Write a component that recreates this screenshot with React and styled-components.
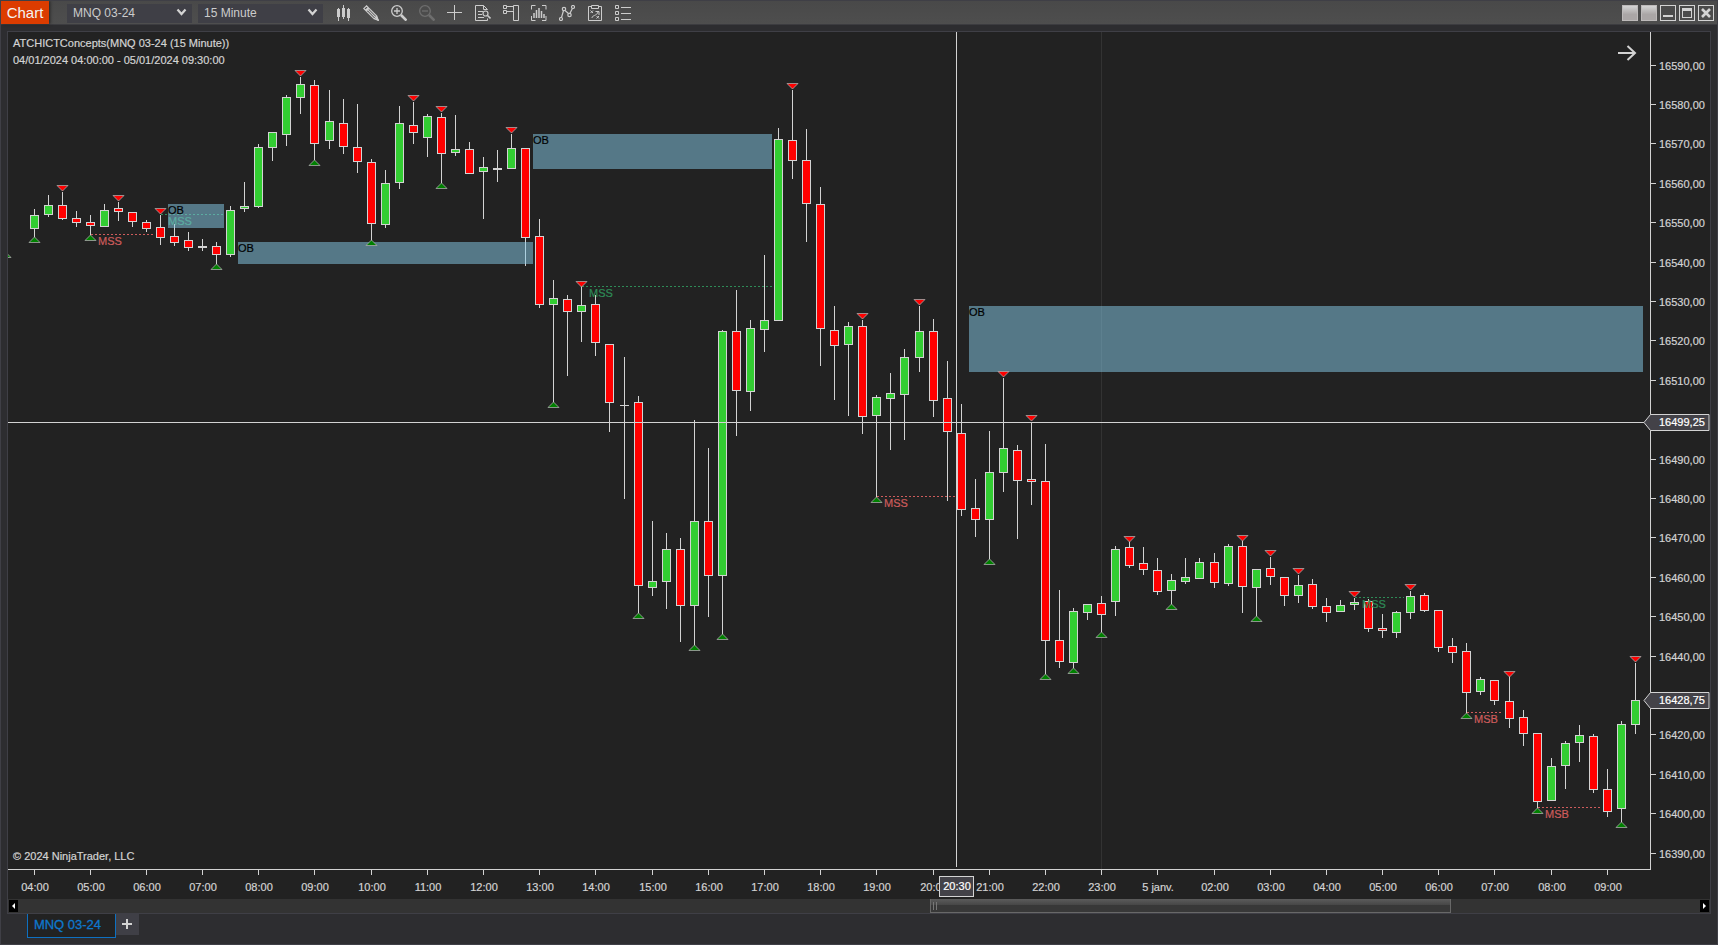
import {useLayoutEffect, useRef, useState} from "react";
import styled, {createGlobalStyle} from "styled-components";


const BAR_SPACING = 14.048;
const AXIS_WIDTH = 60;
const TIME_AXIS_HEIGHT = 30;
const RANGE_TOP = 32;
const RANGE = 837;
const LIGHT = "#d3d3d3";

// high, body top, body bottom, low, direction (u = up, d = down, n = flat)
const bars = [
    [209, 215, 229, 237, "u"], [195, 205, 215, 217, "u"], [192, 205, 219, 220, "d"], [211, 218, 223, 227, "d"],
    [215, 222, 226, 235, "d"], [204, 210, 227, 227, "u"], [202, 208, 212, 221, "d"], [212, 212, 222, 227, "d"],
    [220, 222, 229, 232, "d"], [215, 227, 238, 245, "d"], [224, 236, 243, 246, "d"], [232, 240, 248, 251, "d"],
    [239, 246, 248, 251, "n"], [242, 246, 255, 264, "d"], [206, 210, 255, 257, "u"], [182, 206, 209, 212, "u"],
    [144, 147, 207, 208, "u"], [132, 132, 148, 161, "u"], [95, 97, 135, 146, "u"], [77, 84, 98, 114, "u"],
    [80, 85, 144, 160, "d"], [90, 121, 141, 149, "u"], [99, 123, 147, 154, "d"], [104, 147, 162, 173, "d"],
    [159, 162, 224, 241, "d"], [170, 183, 225, 228, "u"], [106, 123, 183, 189, "u"], [102, 125, 133, 144, "d"],
    [114, 116, 138, 157, "u"], [113, 117, 154, 183, "d"], [115, 149, 153, 156, "u"], [142, 149, 174, 174, "d"],
    [157, 167, 172, 219, "u"], [150, 168, 170, 182, "n"], [134, 148, 169, 169, "u"], [148, 148, 238, 266, "d"],
    [219, 236, 305, 308, "d"], [280, 298, 305, 402, "u"], [295, 299, 312, 376, "d"], [286, 305, 312, 342, "u"],
    [295, 304, 343, 356, "d"], [344, 344, 403, 432, "d"], [357, 405, 406, 499, "n"], [396, 402, 586, 613, "d"],
    [521, 581, 588, 596, "u"], [533, 549, 582, 609, "u"], [538, 549, 606, 642, "d"], [420, 521, 606, 645, "u"],
    [448, 521, 576, 617, "d"], [330, 331, 576, 634, "u"], [290, 331, 391, 436, "d"], [320, 328, 392, 411, "u"],
    [255, 320, 330, 352, "u"], [128, 139, 321, 321, "u"], [90, 140, 161, 179, "d"], [129, 160, 204, 242, "d"],
    [187, 204, 329, 366, "d"], [306, 330, 346, 400, "d"], [322, 326, 345, 416, "u"], [320, 326, 417, 434, "d"],
    [395, 397, 416, 497, "u"], [373, 393, 399, 450, "u"], [349, 357, 395, 440, "u"], [306, 331, 358, 372, "u"],
    [319, 331, 401, 417, "d"], [361, 398, 432, 501, "d"], [404, 433, 510, 516, "d"], [479, 508, 520, 537, "d"],
    [431, 472, 520, 559, "u"], [378, 448, 473, 492, "u"], [445, 450, 481, 539, "d"], [422, 479, 482, 505, "d"],
    [444, 481, 641, 674, "d"], [590, 640, 662, 668, "d"], [608, 611, 663, 668, "u"], [604, 604, 613, 620, "u"],
    [596, 603, 615, 632, "d"], [546, 549, 602, 616, "u"], [542, 547, 566, 568, "d"], [547, 563, 570, 575, "d"],
    [558, 570, 592, 595, "d"], [574, 580, 591, 604, "u"], [558, 577, 582, 584, "u"], [558, 562, 579, 579, "u"],
    [553, 562, 583, 588, "d"], [544, 546, 584, 586, "u"], [541, 546, 587, 613, "d"], [569, 569, 588, 616, "u"],
    [557, 568, 577, 585, "d"], [577, 577, 596, 606, "d"], [575, 585, 596, 603, "u"], [579, 584, 607, 609, "d"],
    [598, 606, 613, 622, "d"], [600, 605, 612, 612, "u"], [598, 602, 605, 610, "u"], [599, 601, 629, 632, "d"],
    [614, 628, 631, 638, "d"], [611, 612, 633, 638, "u"], [591, 596, 613, 619, "u"], [593, 595, 611, 612, "d"],
    [610, 610, 648, 652, "d"], [638, 646, 653, 663, "d"], [643, 651, 693, 713, "d"], [677, 679, 692, 695, "u"],
    [680, 680, 701, 705, "d"], [676, 701, 719, 728, "d"], [710, 717, 734, 746, "d"], [733, 733, 802, 808, "d"],
    [758, 766, 801, 801, "u"], [741, 743, 766, 789, "u"], [725, 735, 743, 762, "u"], [734, 736, 790, 793, "d"],
    [769, 789, 812, 817, "d"], [721, 724, 809, 822, "u"], [663, 700, 725, 734, "u"]
];

// bar index, top of the marker
const swingHighs = [
    [2, 185], [6, 195], [9, 208], [19, 70], [27, 95], [29, 106], [34, 127], [39, 281], [54, 83], [59, 313], [63, 299],
    [69, 371], [71, 415], [78, 536], [86, 535], [88, 550], [90, 568], [94, 591], [98, 584], [105, 671], [114, 656]
];

const swingLows = [
    [-2, 252], [0, 237], [4, 235], [13, 264], [20, 160], [24, 240], [29, 183], [37, 402], [43, 613], [47, 645],
    [49, 634], [60, 497], [68, 559], [72, 674], [74, 668], [76, 632], [81, 604], [87, 616], [102, 713], [107, 808],
    [113, 822]
];

const orderBlocks = [
    {from: 9, to: 13, top: 204, bottom: 228},
    {from: 14, to: 35, top: 242, bottom: 264},
    {from: 35, to: 52, top: 134, bottom: 169},
    {from: 66, to: 114, top: 306, bottom: 372}
];

const structures = [
    {from: 4, to: 8, level: 234, label: "MSS", bullish: false},
    {from: 9, to: 13, level: 214, label: "MSS", bullish: true},
    {from: 39, to: 52, level: 286, label: "MSS", bullish: true},
    {from: 60, to: 65, level: 496, label: "MSS", bullish: false},
    {from: 94, to: 97, level: 597, label: "MSS", bullish: true},
    {from: 102, to: 104, level: 712, label: "MSB", bullish: false},
    {from: 107, to: 111, level: 807, label: "MSB", bullish: false}
];

const timeLabels = [
    "04:00", "05:00", "06:00", "07:00", "08:00", "09:00", "10:00", "11:00", "12:00", "13:00", "14:00", "15:00",
    "16:00", "17:00", "18:00", "19:00", "20:00", "21:00", "22:00", "23:00", "5 janv.", "02:00", "03:00", "04:00",
    "05:00", "06:00", "07:00", "08:00", "09:00"
];

const fills = {u: "#32cd32", d: "#ff0000", n: LIGHT};

const GlobalStyle = createGlobalStyle`
  * {
    box-sizing: border-box;
  }

  body {
    margin: 0;
    background-color: #2d2d30;
    font-family: "Liberation Sans", Arial, sans-serif;
    color: ${LIGHT};
  }

  button, select {
    font-family: inherit;
    padding: 0;
    border: none;
    border-radius: 0;
  }
`;

const Window = styled.div`
  height: 100vh;
  min-height: 400px;
  display: flex;
  flex-direction: column;
  border: 1px solid #3f3f46;
  overflow: hidden;
`;

const TitleBar = styled.header`
  height: 24px;
  flex: none;
  display: flex;
  align-items: center;
  padding-right: 3px;
  background: linear-gradient(#494949, #4e4e4e);
  border-bottom: 1px solid #3c3c40;
`;

const Title = styled.h1`
  height: 23px;
  width: 48px;
  margin: 0 18px 0 0;
  background-color: #dc3c00;
  box-shadow: 1px 0 3px #222222;
  color: #f4f4f4;
  font-size: 15px;
  font-weight: normal;
  line-height: 23px;
  text-align: center;
`;

const Dropdown = styled.div`
  position: relative;
  width: 125px;
  height: 19px;
  margin-right: ${props => props.$last ? "12px" : "6px"};

  select {
    appearance: none;
    width: 100%;
    height: 100%;
    padding-left: 6px;
    background-color: #3f3f46;
    color: #cccccc;
    font-size: 12px;
  }

  svg {
    position: absolute;
    right: 5px;
    top: 5px;
    pointer-events: none;
  }
`;

const Tools = styled.nav`
  display: flex;
  gap: 12px;
  flex: 1;
`;

const IconButton = styled.button`
  width: 16px;
  height: 16px;
  background: none;
  color: ${props => props.disabled ? "#6e6e6e" : "#cccccc"};

  svg {
    display: block;
  }
`;

const WindowButtons = styled.div`
  display: flex;
  gap: 3px;
`;

const WindowButton = styled.button`
  width: 16px;
  height: 16px;
  background: ${props => props.$filled ? "linear-gradient(#d4d4d4, #aaa6a6 60%)" : "none"};
  border: 1px solid ${props => props.$filled ? "#bdbaba" : LIGHT};
  color: ${LIGHT};

  svg {
    display: block;
  }
`;

const Panel = styled.main`
  flex: 1;
  min-height: 0;
  margin: 6px 6px 0;
  display: flex;
  flex-direction: column;
  border: 1px solid #3f3f46;
  background-color: #222222;
`;

const Plot = styled.div`
  flex: 1;
  min-height: 0;
  overflow: hidden;

  svg {
    display: block;
    width: 100%;
    height: 100%;
  }
`;

const ChartText = styled.text`
  font-size: 11px;
  fill: ${props => props.$color || LIGHT};
  stroke: ${props => props.$color || LIGHT};
  stroke-width: 0.2px;
`;

const ScrollBar = styled.div`
  height: 14px;
  flex: none;
  display: flex;
  align-items: center;
  padding: 0 1px;
  background-color: #333333;
`;

const ScrollArrow = styled.button`
  width: 9px;
  height: 12px;
  background-color: #000000;

  svg {
    display: block;
  }
`;

const ScrollTrack = styled.div`
  flex: 1;
  height: 14px;
  display: flex;
`;

const ScrollThumb = styled.div`
  width: 31%;
  height: 14px;
  margin-left: 54.2%;
  padding: 3px 2px;
  display: flex;
  gap: 2px;
  background: linear-gradient(#5c5c5c, #454545 50%, #383838 50%);
  border: solid #686868;
  border-width: 0 1px 1px;
`;

const Grip = styled.span`
  width: 1px;
  height: 8px;
  background-color: #777777;
`;

const TabBar = styled.footer`
  height: 30px;
  flex: none;
  display: flex;
  align-items: flex-start;
  padding-left: 26px;
`;

const Tab = styled.button`
  width: 89px;
  height: 24px;
  padding: 0 8px 2px 0;
  background-color: #222222;
  border: solid #0e70c0;
  border-width: 0 1px 1px;
  color: #0e78cc;
  font-size: 13px;
  -webkit-text-stroke: 0.3px #0e78cc;
`;

const AddTab = styled.button`
  width: 23px;
  height: 21px;
  padding: 0 1px 1px 0;
  background-color: #3f3f46;
  color: ${LIGHT};

  svg {
    display: block;
    margin: auto;
  }
`;

const tools = [
    {
        name: "Chart style",
        icon: <g fill="currentColor"><path d="M2 4h3v8H2zM3 3h1v13H3zM7 3h3v9H7zM8 0h1v14H8zM12 4h3v9h-3zM13 3h1v13h-1z" /></g>
    },
    {
        name: "Drawing tools",
        icon: <g fill="none" stroke="currentColor" strokeWidth="1.2"><path d="M3.5 .8.8 3.5l1.7 1.7 2.7-2.7zM3.3 6l2.7-2.7 7.8 7.8 1.2 3.9-3.9-1.2zM4.7 4.7l7.8 7.8M11.1 13.8l2.7-2.7" /><path d="M14 13l1.7 2.7L13 14z" fill="currentColor" /></g>
    },
    {
        name: "Zoom in",
        icon: <g fill="none" stroke="currentColor"><circle cx="6" cy="6" r="5.3" strokeWidth="1.3" /><path d="M3 6h6M6 3v6" strokeWidth="1.3" /><path d="m10 10 5.5 5.5" strokeWidth="2.6" /></g>
    },
    {
        name: "Zoom out",
        disabled: true,
        icon: <g fill="none" stroke="currentColor"><circle cx="6" cy="6" r="5.3" strokeWidth="1.3" /><path d="M3 6h6" strokeWidth="1.3" /><path d="m10 10 5.5 5.5" strokeWidth="2.6" /></g>
    },
    {
        name: "Cursor",
        icon: <path d="M7 0h1v15H7zM0 7h15v1H0z" fill="currentColor" />
    },
    {
        name: "Data box",
        icon: <g fill="none" stroke="currentColor"><path d="M12.5 13.5v2H.5V.5h8l4 4M8.5.5v4h4" /><path d="M3 6.5h5M3 9.5h4M3 12.5h6" /><circle cx="10.5" cy="8.5" r="2.5" strokeWidth="1.2" /><path d="m12.5 10.5 3 3" strokeWidth="1.6" /></g>
    },
    {
        name: "Chart trader",
        icon: <g fill="none" stroke="currentColor"><path d="M.5.5h3v3h-3zM.5 5.5h3v3h-3zM10.5 5.5V.5h5v15h-5v-10M4 1.5h6.5M4 6.5h6.5" /></g>
    },
    {
        name: "Indicators",
        icon: <g fill="none" stroke="currentColor"><path d="M4.5.5h-4v4M11 .5h4v4M.5 11v4.5h4M15 11v4.5h-4" /><path d="M3 13V8M5.5 13V5M8 13V3M10.5 13V6M13 13V9" strokeWidth="1.5" /></g>
    },
    {
        name: "Strategies",
        icon: <g fill="none" stroke="currentColor" strokeWidth="1.2"><circle cx="2" cy="14" r="1.5" /><circle cx="5" cy="4" r="1.7" /><circle cx="10.5" cy="10" r="1.7" /><circle cx="14" cy="2" r="1.5" /><path d="M2.5 12.5 4.5 5.5M6 5.5l3.5 3M11 8.3l2.5-5" /></g>
    },
    {
        name: "Properties",
        icon: <g fill="none" stroke="currentColor"><path d="M4.5 1.5h-3v14h13v-14h-3M4.5.5h7v3h-7z" /><path d="m3.5 5.5 2.5 2.5M6 5.5 3.5 8M9.5 11l2.5 2.5M12 11l-2.5 2.5M5 13c0-3 5-2 6-6M8.5 6.5H12V10" /></g>
    },
    {
        name: "List",
        icon: <g fill="none" stroke="currentColor"><path d="M.5.5h3v3h-3zM.5 6.5h3v3h-3zM.5 12.5h3v3h-3z" /><path d="M6 2.5h10M6 8.5h10M6 14.5h10" /></g>
    }
];

function Select({label, value, last}) {
    return (
        <Dropdown $last={last}>
            <select aria-label={label} defaultValue={value}>
                <option>{value}</option>
            </select>
            <svg width="11" height="8" viewBox="0 0 11 8">
                <path d="M1.5 1.5 5.5 6l4-4.5" fill="none" stroke="#d3d3d3" strokeWidth="2.2" />
            </svg>
        </Dropdown>
    );
}

function Candle({x, y, bar}) {
    const [high, top, bottom, low, direction] = bar;
    const bodyTop = y(top);
    const bodyHeight = y(bottom) - bodyTop;

    return (
        <g shapeRendering="crispEdges">
            <rect x={x} y={y(high)} width="1" height={y(low) - y(high)} fill={LIGHT} />
            <rect x={x - 4} y={bodyTop} width="9" height={bodyHeight} fill={LIGHT} />
            {
                direction !== "n" && bodyHeight > 2
                    ?
                    <rect x={x - 3} y={bodyTop + 1} width="7" height={bodyHeight - 2} fill={fills[direction]} />
                    :
                    ""
            }
        </g>
    );
}

function PriceTag({x, y, children}) {
    return (
        <g transform={`translate(${x} ${y})`}>
            <path d={`M-6 .5 .5-7.5H${AXIS_WIDTH - 1}V8.5H.5z`} fill="#434248" stroke={LIGHT} />
            <ChartText x="9" y="4" $color="#ffffff">{children}</ChartText>
        </g>
    );
}

function PriceChart() {
    const box = useRef(null);
    const [size, setSize] = useState({width: 1702, height: 867});

    useLayoutEffect(() => {
        const measure = () => setSize({width: box.current.clientWidth, height: box.current.clientHeight});
        measure();
        window.addEventListener("resize", measure);
        return () => window.removeEventListener("resize", measure);
    }, []);

    const right = size.width - AXIS_WIDTH;
    const bottom = size.height - TIME_AXIS_HEIGHT;
    const x = index => right - 1616 + Math.floor(index * BAR_SPACING);
    const y = value => Math.round((value - RANGE_TOP) * bottom / RANGE);

    const prices = [];
    for (let i = 0; i <= 20; i++) {
        prices.push({price: 16590 - i * 10, y: y(Math.floor(65 + i * 39.4))});
    }

    const cursorX = x(65) + 9;
    const cursorY = y(422);

    return (
        <Plot ref={box}>
            <svg role="img" aria-label="MNQ 03-24, 15 minute candles">
                <rect x={x(76)} width="1" height={bottom} fill="#333333" />

                {bars.map((bar, i) => <Candle key={i} x={x(i)} y={y} bar={bar} />)}

                {structures.map(s => {
                    const color = s.bullish ? "#2e8b57" : "#cd5c5c";
                    return (
                        <g key={s.level}>
                            <line
                                x1={x(s.from) + 1} x2={x(s.to) + 8} y1={y(s.level) + 0.5} y2={y(s.level) + 0.5}
                                stroke={color} strokeDasharray="2 2"
                            />
                            <ChartText x={x(s.from) + 8} y={y(s.level) + 11} $color={color}>{s.label}</ChartText>
                        </g>
                    );
                })}

                {orderBlocks.map(b => (
                    <g key={b.from}>
                        <rect
                            x={x(b.from) + 8} y={y(b.top)} width={x(b.to) - x(b.from)} height={y(b.bottom) - y(b.top)}
                            fill="#87ceeb" fillOpacity="0.5"
                        />
                        <ChartText x={x(b.from) + 8} y={y(b.top) + 10} $color="#000000">OB</ChartText>
                    </g>
                ))}

                {swingHighs.map(([i, top]) => (
                    <path
                        key={i} transform={`translate(${x(i)} ${y(top)})`}
                        d="M-5 .5H6L.5 6z" fill="#ff0000" stroke="#a9a9a9" strokeWidth="0.8"
                    />
                ))}
                {swingLows.map(([i, top]) => (
                    <path
                        key={i} transform={`translate(${x(i)} ${y(top)})`}
                        d="M-5 5.5H6L.5 0z" fill="#008000" stroke="#a9a9a9" strokeWidth="0.8"
                    />
                ))}

                {/* axes */}
                <g fill={LIGHT}>
                    <rect x={right} width="1" height={bottom + 1} />
                    <rect y={bottom} width={right + 1} height="1" />
                    {prices.map(p => <rect key={p.price} x={right} y={p.y} width="6" height="1" />)}
                    {timeLabels.map((t, i) => <rect key={i} x={x(i * 4)} y={bottom} width="1" height="6" />)}
                </g>
                {prices.filter(p => p.price !== 16500 && p.price !== 16430).map(p => (
                    <ChartText key={p.price} x={right + 9} y={p.y + 5}>{p.price},00</ChartText>
                ))}
                {timeLabels.map((t, i) => (
                    <ChartText key={i} x={x(i * 4) + 1} y={bottom + 22} textAnchor="middle">{t}</ChartText>
                ))}

                {/* crosshair */}
                <rect x={cursorX} width="1" height={bottom - 2} fill={LIGHT} />
                <rect y={cursorY} width={right - 6} height="1" fill={LIGHT} />
                <rect x={cursorX - 16.5} y={bottom + 7.5} width="34" height="20" fill="#434248" stroke={LIGHT} />
                <ChartText x={cursorX + 1} y={bottom + 21} textAnchor="middle" $color="#ffffff">20:30</ChartText>
                <PriceTag x={right} y={cursorY}>16499,25</PriceTag>
                <PriceTag x={right} y={y(700)}>16428,75</PriceTag>

                <ChartText x="5" y="15">ATCHICTConcepts(MNQ 03-24 (15 Minute))</ChartText>
                <ChartText x="5" y="32">04/01/2024 04:00:00 - 05/01/2024 09:30:00</ChartText>
                <ChartText x="5" y={bottom - 9}>© 2024 NinjaTrader, LLC</ChartText>
                <path
                    transform={`translate(${right - 32} 13)`} d="M0 8h17M9.5 1l7.5 7-7.5 7"
                    fill="none" stroke={LIGHT} strokeWidth="2"
                />
            </svg>
        </Plot>
    );
}

function App() {
    return (
        <>
            <GlobalStyle />
            <Window>
                <TitleBar>
                    <Title>Chart</Title>
                    <Select label="Instrument" value="MNQ 03-24" />
                    <Select label="Interval" value="15 Minute" last />
                    <Tools>
                        {tools.map(tool => (
                            <IconButton key={tool.name} aria-label={tool.name} disabled={tool.disabled}>
                                <svg width="16" height="16" viewBox="0 0 16 16">{tool.icon}</svg>
                            </IconButton>
                        ))}
                    </Tools>
                    <WindowButtons>
                        <WindowButton $filled aria-label="Instrument link" />
                        <WindowButton $filled aria-label="Interval link" />
                        <WindowButton aria-label="Minimize">
                            <svg width="14" height="14"><path d="M2 9h10v2H2z" fill="currentColor" /></svg>
                        </WindowButton>
                        <WindowButton aria-label="Maximize">
                            <svg width="14" height="14"><path d="M2 2h10v10H2zM3 5v6h8V5z" fill="currentColor" fillRule="evenodd" /></svg>
                        </WindowButton>
                        <WindowButton aria-label="Close">
                            <svg width="14" height="14"><path d="m3 3 8 8M11 3l-8 8" stroke="currentColor" strokeWidth="2.6" /></svg>
                        </WindowButton>
                    </WindowButtons>
                </TitleBar>
                <Panel>
                    <PriceChart />
                    <ScrollBar>
                        <ScrollArrow aria-label="Scroll left">
                            <svg width="9" height="12"><path d="M6 3v6L3 6z" fill="#ffffff" /></svg>
                        </ScrollArrow>
                        <ScrollTrack>
                            <ScrollThumb>
                                <Grip />
                                <Grip />
                            </ScrollThumb>
                        </ScrollTrack>
                        <ScrollArrow aria-label="Scroll right">
                            <svg width="9" height="12"><path d="M3 3v6l3-3z" fill="#ffffff" /></svg>
                        </ScrollArrow>
                    </ScrollBar>
                </Panel>
                <TabBar>
                    <Tab>MNQ 03-24</Tab>
                    <AddTab aria-label="Add tab">
                        <svg width="10" height="10"><path d="M4 0h2v10H4zM0 4h10v2H0z" fill="currentColor" /></svg>
                    </AddTab>
                </TabBar>
            </Window>
        </>
    );
}

export default App;
